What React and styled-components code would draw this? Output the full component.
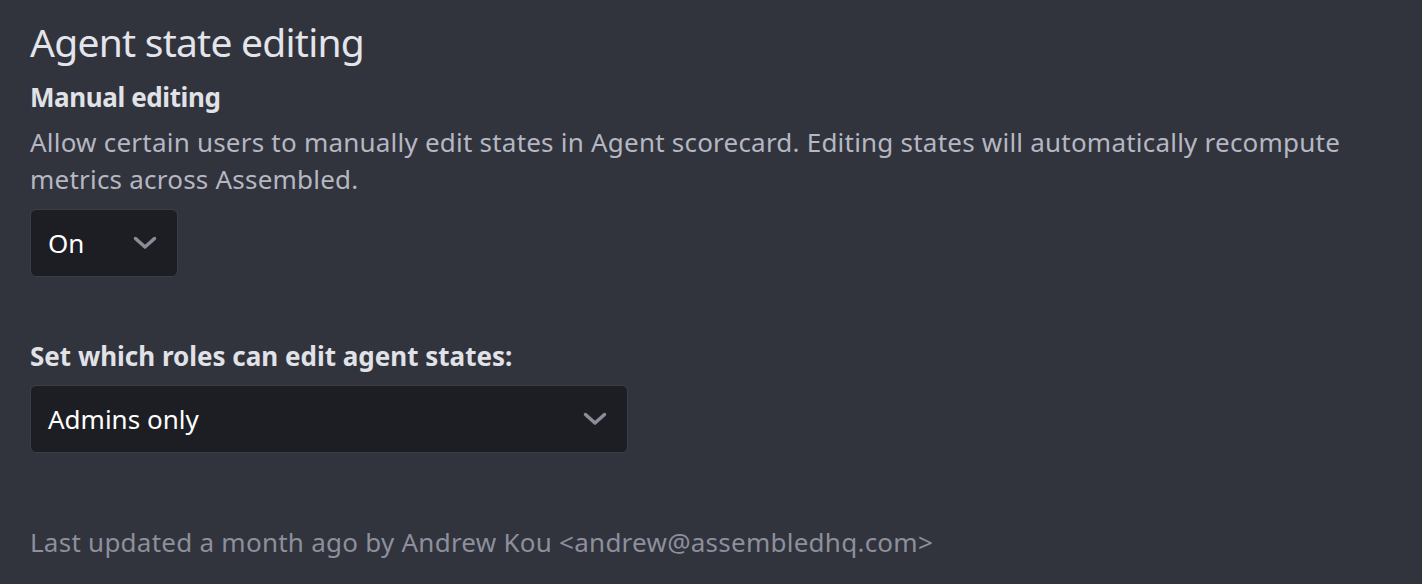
import React from "react";
import styled, { createGlobalStyle } from "styled-components";

const GlobalStyle = createGlobalStyle`
  html, body {
    margin: 0;
    padding: 0;
    background: #31333d;
  }
  body {
    font-family: "Noto Sans", "Open Sans", sans-serif;
  }
`;

const Page = styled.main`
  min-height: 584px;
  box-sizing: border-box;
  padding: 16px 30px 0 30px;
  color: #d9dae0;
`;

const Title = styled.h1`
  margin: 0;
  font-size: 39px;
  font-weight: 400;
  line-height: 52px;
  letter-spacing: -0.75px;
  color: #e4e5ea;
`;

const Section = styled.section`
  display: flex;
  flex-direction: column;
  align-items: flex-start;
  margin-top: ${(p) => p.$top || 0}px;
`;

const Label = styled.h2`
  margin: 0;
  font-size: 26px;
  font-weight: 700;
  line-height: 36px;
  letter-spacing: ${(p) => p.$spacing || 0}px;
  color: #e1e2e7;
`;

const Help = styled.p`
  margin: 9px 0 0 0;
  max-width: 1370px;
  font-size: 26px;
  line-height: 37px;
  letter-spacing: 0.22px;
  color: #b5b7c2;
`;

const SelectBox = styled.div`
  display: flex;
  align-items: center;
  justify-content: space-between;
  box-sizing: border-box;
  width: ${(p) => p.$width}px;
  height: 68px;
  margin-top: 11px;
  padding: 0 20px 0 17px;
  background: #1d1e23;
  border: 1px solid #3b3d49;
  border-radius: 6px;
  font-size: 26px;
  color: #ffffff;
`;

const Footer = styled.p`
  margin: 71px 0 0 0;
  font-size: 26px;
  line-height: 36px;
  letter-spacing: 0.25px;
  color: #8d8f9c;
`;

const Chevron = () => (
  <svg width="24" height="14" viewBox="0 0 24 14" fill="none">
    <path
      d="M2.5 2.5 L12 11 L21.5 2.5"
      stroke="#8a8c99"
      strokeWidth="3.5"
      strokeLinecap="round"
      strokeLinejoin="round"
    />
  </svg>
);

const Select = ({ value, width }) => (
  <SelectBox $width={width}>
    <span>{value}</span>
    <Chevron />
  </SelectBox>
);

export default function App() {
  return (
    <>
      <GlobalStyle />
      <Page>
        <Title>Agent state editing</Title>
        <Section $top={11}>
          <Label $spacing={-0.4}>Manual editing</Label>
          <Help>
            Allow certain users to manually edit states in Agent scorecard. Editing states will
            automatically recompute
            <br />
            metrics across Assembled.
          </Help>
          <Select value="On" width={148} />
        </Section>
        <Section $top={61}>
          <Label>Set which roles can edit agent states:</Label>
          <Select value="Admins only" width={598} />
        </Section>
        <Footer>Last updated a month ago by Andrew Kou &lt;andrew@assembledhq.com&gt;</Footer>
      </Page>
    </>
  );
}
